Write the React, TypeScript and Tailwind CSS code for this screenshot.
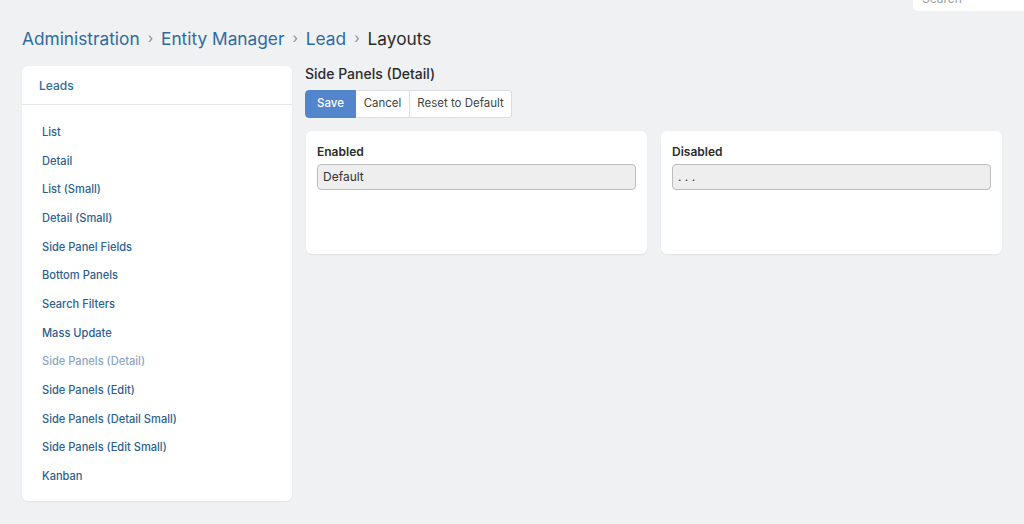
import React from "react";

const layouts = [
  "List",
  "Detail",
  "List (Small)",
  "Detail (Small)",
  "Side Panel Fields",
  "Bottom Panels",
  "Search Filters",
  "Mass Update",
  "Side Panels (Detail)",
  "Side Panels (Edit)",
  "Side Panels (Detail Small)",
  "Side Panels (Edit Small)",
  "Kanban",
];

const active = "Side Panels (Detail)";

function Crumb({ children }: { children: React.ReactNode }) {
  return <span className="text-[#2f6aa3]">{children}</span>;
}

function Sep() {
  return <span className="mx-[8px] text-[#8a8f96] text-[14px] relative top-[-1px]">›</span>;
}

function ListCard({ title, value }: { title: string; value: string }) {
  return (
    <div className="flex-1 bg-white rounded-[6px] h-[123px] px-[11px] pt-[13px] shadow-[0_1px_2px_rgba(0,0,0,0.06)]">
      <div className="text-[12px] font-semibold text-[#2b2b2b] leading-[16px] mb-[4px]">{title}</div>
      <div className="h-[26px] rounded-[4px] border border-[#bdbdbd] bg-[#eeeeee] px-[5px] flex items-center text-[12px] text-[#333]">
        {value}
      </div>
    </div>
  );
}

export default function App() {
  return (
    <div
      className="w-[1024px] h-[524px] overflow-hidden bg-[#f0f1f3] relative"
      style={{ fontFamily: "Inter, 'Noto Sans', sans-serif" }}
    >
      <div className="flex justify-end h-0">
        <div className="w-[111px] h-[28px] -mt-[17px] bg-white rounded-l-[5px] px-[9px] flex items-end pb-[3px] text-[12px] text-[#9aa0a6]">
          Search
        </div>
      </div>

      <div className="pl-[22px] pt-[26px] text-[17.3px] leading-[26px] flex items-center">
        <Crumb>Administration</Crumb>
        <Sep />
        <Crumb>Entity Manager</Crumb>
        <Sep />
        <Crumb>Lead</Crumb>
        <Sep />
        <span className="text-[#2b2b2b]">Layouts</span>
      </div>

      <div className="flex pl-[22px] pr-[22px] mt-[14px] gap-[13px]">
        <div className="w-[270px] bg-white rounded-[6px] shadow-[0_1px_2px_rgba(0,0,0,0.06)] pb-[10px] shrink-0">
          <div className="h-[39px] border-b border-[#e6e7ea] flex items-center pl-[17px] pt-[1px] text-[12px] font-medium text-[#2f6aa3]">
            Leads
          </div>
          <ul className="pt-[13px]">
            {layouts.map((l) => (
              <li
                key={l}
                className={
                  "h-[28.67px] flex items-center pl-[20px] text-[11.1px] font-medium " +
                  (l === active ? "text-[#8aa6c3]" : "text-[#2d5f91]")
                }
              >
                {l}
              </li>
            ))}
          </ul>
        </div>

        <div className="flex-1 flex flex-col">
          <div className="text-[14px] font-medium text-[#2b2b2b] leading-[16px]">Side Panels (Detail)</div>
          <div className="flex mt-[8px] h-[28px] text-[11.5px]">
            <button className="w-[51px] bg-[#5285cc] text-white font-medium rounded-l-[4px] border border-[#5285cc]">Save</button>
            <button className="w-[54px] bg-white text-[#444] border-y border-r border-[#dcdde0]">Cancel</button>
            <button className="w-[102px] bg-white text-[#444] border-y border-r border-[#dcdde0] rounded-r-[4px]">
              Reset to Default
            </button>
          </div>
          <div className="flex gap-[14px] mt-[13px] pl-[1px] w-[697px]">
            <ListCard title="Enabled" value="Default" />
            <ListCard title="Disabled" value=". . ." />
          </div>
        </div>
      </div>
    </div>
  );
}
